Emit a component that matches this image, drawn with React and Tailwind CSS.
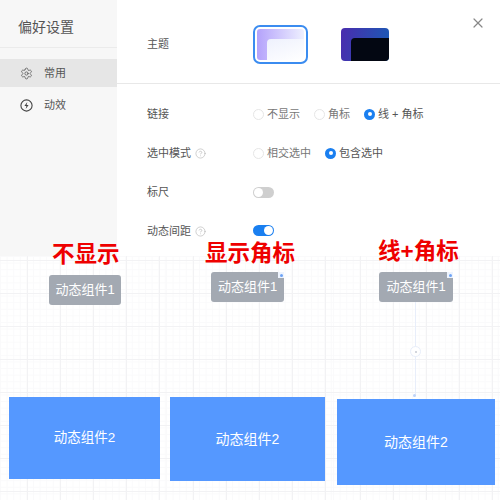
import React from 'react';
import { X, Settings, CircleHelp } from 'lucide-react';

const cjk = "font-['Liberation_Sans','Noto_Sans_CJK_SC',sans-serif]";

const Radio = ({ label, checked }) => (
  <div className="flex items-center gap-[3px]">
    {checked ? (
      <span className="w-[11px] h-[11px] rounded-full bg-[#1a7ff0] flex items-center justify-center">
        <span className="w-[4px] h-[4px] rounded-full bg-white" />
      </span>
    ) : (
      <span className="w-[11px] h-[11px] rounded-full border border-[#e6e6e6] bg-white" />
    )}
    <span className={checked ? 'text-[#555]' : 'text-[#777]'}>{label}</span>
  </div>
);

const Row = ({ label, help, children }) => (
  <div className="flex items-center h-[38px]">
    <div className="w-[106px] flex items-center gap-[4px] text-[#555]">
      {label}
      {help && <CircleHelp size={11} strokeWidth={1.2} className="text-[#aaa]" />}
    </div>
    {children}
  </div>
);

const Canvas = ({ className = '', children }) => (
  <div className={`relative h-[244px] bg-[linear-gradient(#f2f2f4_1px,transparent_1px),linear-gradient(90deg,#f2f2f4_1px,transparent_1px),linear-gradient(#fafafb_1px,transparent_1px),linear-gradient(90deg,#fafafb_1px,transparent_1px)] bg-[size:33px_33px,33px_33px,6.6px_6.6px,6.6px_6.6px] bg-[position:-6px_4px,-6px_4px,0_0,0_0] ${className}`}>
    {children}
  </div>
);

const Corner = ({ className }) => (
  <span className={`absolute w-[6px] h-[6px] bg-[#eef4fe] flex items-center justify-center ${className}`}>
    <span className="w-[3px] h-[3px] rounded-full bg-[#6ea3f5]" />
  </span>
);

export default function App() {
  return (
    <div className={`w-[500px] h-[500px] overflow-hidden bg-white text-[11px] ${cjk}`}>
      {/* 上方偏好設置 */}
      <div className="relative flex h-[256px]">
        <aside className="w-[117px] bg-[#f7f7f7] shrink-0">
          <div className="h-[48px] border-b border-[#ebebeb] pl-[18px] pt-[17px] text-[14px] leading-[20px] text-[#555]">
            偏好设置
          </div>
          <div className="mt-[11px] h-[28px] bg-[#e6e6e6] flex items-center gap-[11px] pl-[20px] text-[#555]">
            <Settings size={13} strokeWidth={1.4} />
            常用
          </div>
          <div className="mt-[4px] h-[28px] flex items-center gap-[11px] pl-[20px] text-[#555]">
            <svg width="13" height="13" viewBox="0 0 13 13" fill="none">
              <circle cx="6.5" cy="6.5" r="5.6" stroke="#444" strokeWidth="1.1" />
              <path d="M7.3 3 4.4 7h2l-.7 3 2.9-4h-2z" fill="#444" />
            </svg>
            动效
          </div>
        </aside>

        <main className="flex-1 min-w-0">
          <div className="h-[84px] border-b border-[#e8e8e8] pl-[30px] pt-[6px] flex items-center text-[#555]">
            <div className="w-[106px]">主题</div>
            <div className="w-[55px] h-[39px] rounded-[7px] border-2 border-[#3b8cf0] p-[2px]">
              <div className="h-full rounded-[3px] bg-[linear-gradient(90deg,#b4a2fb,#eef0ff)] pl-[10px] pt-[10px]">
                <div className="h-full rounded-tl-[4px] bg-[linear-gradient(160deg,#eef1fd,#ffffff)]" />
              </div>
            </div>
            <div className="ml-[33px] w-[48px] h-[33px] rounded-[4px] bg-[linear-gradient(100deg,#4a2cae,#1a5bb4)] pl-[10px] pt-[10px] overflow-hidden">
              <div className="h-full rounded-tl-[4px] bg-[#030712]" />
            </div>
          </div>

          <div className="pl-[30px] pt-[11px] flex flex-col gap-[1px]">
            <Row label="链接">
              <div className="flex gap-[14px]">
                <Radio label="不显示" />
                <Radio label="角标" />
                <Radio label="线 + 角标" checked />
              </div>
            </Row>
            <Row label="选中模式" help>
              <div className="flex gap-[14px]">
                <Radio label="相交选中" />
                <Radio label="包含选中" checked />
              </div>
            </Row>
            <Row label="标尺">
              <span className="w-[21px] h-[11px] rounded-full bg-[#cfcfcf] p-[1px] flex justify-start">
                <span className="w-[9px] h-[9px] rounded-full bg-white" />
              </span>
            </Row>
            <Row label="动态间距" help>
              <span className="w-[21px] h-[11px] rounded-full bg-[#1a7ff0] p-[1px] flex justify-end -translate-y-[1px]">
                <span className="w-[9px] h-[9px] rounded-full bg-white" />
              </span>
            </Row>
          </div>
        </main>

        <X size={16} strokeWidth={1.8} className="absolute left-[470px] top-[15px] text-[#888]" />
      </div>

      {/* 下方三個畫布 */}
      <div className="grid grid-cols-[166px_167px_167px]">
        <Canvas>
          <div className="absolute left-[52px] -top-[14px] text-[22.5px] leading-[26px] font-bold text-[#ee0000]">不显示</div>
          <div className="absolute left-[49px] top-[19px] w-[72px] h-[30px] rounded-[3px] bg-[#a3a9b2] text-white text-[13px] flex items-center justify-center">动态组件1</div>
          <div className="absolute left-[9px] top-[141px] w-[151px] h-[82px] bg-[#5598ff] text-white text-[13.5px] flex items-center justify-center">动态组件2</div>
        </Canvas>
        <Canvas>
          <div className="absolute left-[39px] -top-[15px] text-[22.5px] leading-[26px] font-bold text-[#ee0000]">显示角标</div>
          <div className="absolute left-[45px] top-[16px] w-[73px] h-[30px] rounded-[3px] bg-[#a3a9b2] text-white text-[13px] flex items-center justify-center">
            动态组件1
            <Corner className="right-0 top-0" />
          </div>
          <div className="absolute left-[4px] top-[141px] w-[155px] h-[84px] bg-[#5598ff] text-white text-[14px] flex items-center justify-center">动态组件2</div>
        </Canvas>
        <Canvas>
          <div className="absolute left-[45px] -top-[17px] text-[22.5px] leading-[26px] font-bold text-[#ee0000]">线+角标</div>
          <div className="absolute left-[82px] top-[46px] w-px h-[94px] bg-[#e8eefa]" />
          <div className="absolute left-[77px] top-[90px] w-[11px] h-[11px] rounded-full border border-[#e8eefa] bg-white flex items-center justify-center">
            <span className="w-[2px] h-[2px] rounded-full bg-[#c5c9d2]" />
          </div>
          <div className="absolute left-[80px] top-[138px] w-[3px] h-[3px] rounded-full bg-[#bdd3f8]" />
          <div className="absolute left-[46px] top-[16px] w-[74px] h-[30px] rounded-[3px] bg-[#a3a9b2] text-white text-[13px] flex items-center justify-center">
            动态组件1
            <Corner className="right-0 top-0" />
          </div>
          <div className="absolute left-[4px] top-[143px] w-[158px] h-[86px] bg-[#5598ff] text-white text-[14px] flex items-center justify-center">动态组件2</div>
        </Canvas>
      </div>
    </div>
  );
}
